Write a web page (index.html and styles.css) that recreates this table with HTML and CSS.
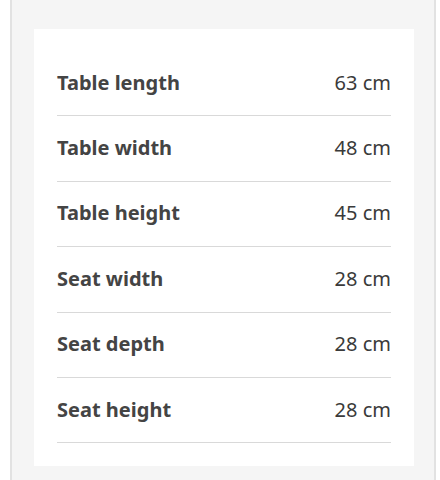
FILE: index.html
```html
<!doctype html>
<html lang="en">
<head>
    <meta charset="UTF-8">
    <meta name="viewport" content="width=device-width, initial-scale=1.0">
    <title>Dimensions</title>
    <link rel="stylesheet" href="styles.css">
</head>
<body>
    <div class="page">
        <div class="card">
            <div class="row"><span class="name">Table length</span><span class="value">63 cm</span></div>
            <div class="row"><span class="name">Table width</span><span class="value">48 cm</span></div>
            <div class="row"><span class="name">Table height</span><span class="value">45 cm</span></div>
            <div class="row"><span class="name">Seat width</span><span class="value">28 cm</span></div>
            <div class="row"><span class="name">Seat depth</span><span class="value">28 cm</span></div>
            <div class="row"><span class="name">Seat height</span><span class="value">28 cm</span></div>
        </div>
    </div>
</body>
</html>
```

FILE: styles.css
```css
html, body {
    margin: 0;
    background-color: #ffffff;
}

body {
    font-family: "Noto Sans", "Open Sans", sans-serif;
    color: #444444;
}

.page {
    margin: 0 4px 0 10px;
    min-height: 480px;
    padding: 29px 20px 0 22px;
    background-color: #f5f5f5;
    border-left: 2px solid #e2e2e2;
    border-right: 2px solid #e2e2e2;
    box-sizing: border-box;
}

.card {
    background-color: #ffffff;
    padding: 22px 23px 23px;
}

.row {
    display: flex;
    justify-content: space-between;
    align-items: center;
    box-sizing: border-box;
    height: 65.4px;
    padding-bottom: 2px;
    border-bottom: 1px solid #d9d9d9;
    font-size: 20px;
}

.name {
    font-weight: bold;
}

.value {
    color: #3a3a3a;
}
```
